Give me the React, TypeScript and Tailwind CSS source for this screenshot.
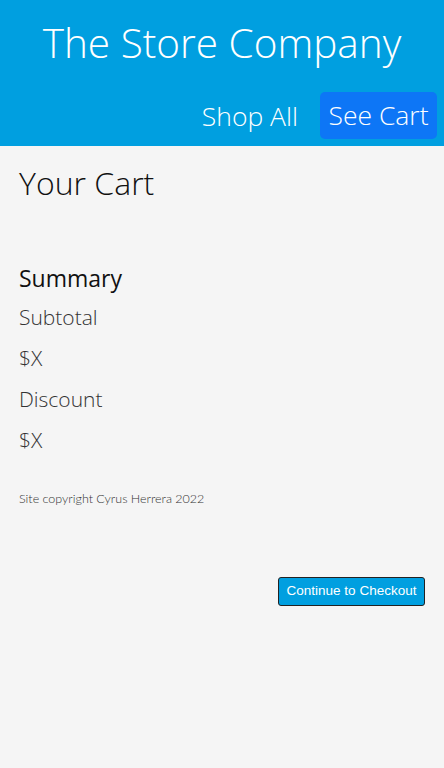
export default function App() {
  return (
    <div className="min-h-[768px] bg-[#f5f5f5] font-['Open_Sans',sans-serif] font-light text-[#111]">
      <header className="bg-[#009fe0] text-white">
        <h1 className="pt-[17px] text-center text-[40.5px] leading-[52px] font-light">
          The Store Company
        </h1>
        <nav className="flex items-center justify-end gap-[22px] pt-[23px] pr-[7px] pb-[7px]">
          <a className="text-[26.5px] leading-[34px] font-light">Shop All</a>
          <a className="flex h-[47px] w-[117px] items-center justify-center rounded-[5px] bg-[#0d76f6] text-[26.5px] font-light">
            See Cart
          </a>
        </nav>
      </header>

      <main className="px-[19px]">
        <h2 className="pt-[17px] text-[32px] leading-[40px] font-light">Your Cart</h2>

        <section className="mt-[60px]">
          <h3 className="text-[23px] leading-[30px] font-normal">Summary</h3>
          <p className="mt-[10px] text-[21px] leading-[28px] text-[#333]">Subtotal</p>
          <p className="mt-[13px] text-[21px] leading-[28px] text-[#333]">$X</p>
          <p className="mt-[13px] text-[21px] leading-[28px] text-[#333]">Discount</p>
          <p className="mt-[13px] text-[21px] leading-[28px] text-[#333]">$X</p>
        </section>

        <footer className="mt-[37px] font-['Lato',sans-serif] text-[12.5px] leading-[16px] text-[#333]">
          Site copyright Cyrus Herrera 2022
        </footer>

        <div className="mt-[70px] flex justify-end">
          <button className="h-[29px] w-[147px] rounded-[3px] border border-[#222] bg-[#009fe0] font-['Liberation_Sans',Arial,sans-serif] text-[13.5px] font-medium text-white">
            Continue to Checkout
          </button>
        </div>
      </main>
    </div>
  );
}
